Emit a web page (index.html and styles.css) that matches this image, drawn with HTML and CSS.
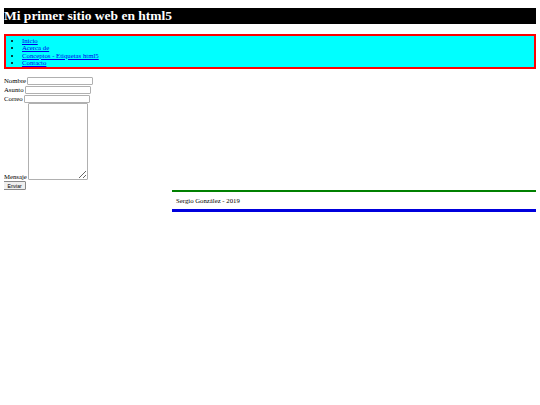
FILE: index.html
```html
<!DOCTYPE html>
<html lang="es">
<head>
  <meta charset="UTF-8" />
  <title>Mi primer sitio web en html5</title>
  <link rel="stylesheet" href="styles.css">
</head>
<body>
  <header>
    <h1>Mi primer sitio web en html5</h1>
  </header>

  <nav class="menu">
    <ul>
      <li><a href="#">Inicio</a></li>
      <li><a href="#">Acerca de</a></li>
      <li><a href="#">Conceptos - Etiquetas html5</a></li>
      <li><a href="#">Contacto</a></li>
    </ul>
  </nav>

  <form class="contacto">
    <p class="fila"><label for="nombre">Nombre</label> <input type="text" id="nombre"></p>
    <p class="fila"><label for="asunto">Asunto</label> <input type="text" id="asunto"></p>
    <p class="fila"><label for="correo">Correo</label> <input type="text" id="correo"></p>
    <p class="fila mensaje"><label for="mensaje">Mensaje</label> <textarea id="mensaje"></textarea></p>
    <button type="button">Enviar</button>
  </form>

  <footer>
    <p>Sergio González - 2019</p>
  </footer>
</body>
</html>
```

FILE: styles.css
```css
    body {
      font-family: "Liberation Serif", serif;
      font-size: 6.75px;
      margin: 0 4px;
      background: white;
    }
    h1 {
      background: black;
      color: white;
      font-size: 13.5px;
      line-height: 16px;
      margin: 8px 0 10px;
    }
    .menu {
      background: cyan;
      border: 2px solid red;
    }
    .menu ul {
      margin: 0;
      padding: 1px 0 1px 16px;
      line-height: 7.3px;
    }
    .menu a {
      color: #0000ee;
    }
    .contacto {
      margin-top: 7px;
    }
    .fila {
      margin: 0;
      height: 9px;
      display: flex;
      align-items: center;
      gap: 1px;
    }
    .fila input {
      box-sizing: border-box;
      width: 66px;
      height: 8px;
      padding: 0;
      border: 1px solid #b0b0b0;
      border-radius: 1px;
      font-size: 5px;
    }
    .fila.mensaje {
      height: auto;
      align-items: flex-end;
    }
    .fila.mensaje label {
      line-height: 6px;
    }
    textarea {
      box-sizing: border-box;
      width: 60px;
      height: 77px;
      padding: 0;
      border: 1px solid #b0b0b0;
      border-radius: 1px;
      resize: both;
      font-size: 5px;
    }
    .contacto button {
      display: block;
      margin-top: 1px;
      margin-left: -1px;
      width: 23px;
      height: 9px;
      padding: 0;
      font-family: "Liberation Sans", sans-serif;
      font-size: 5px;
      background: #efefef;
      border: 1px solid #888;
      border-radius: 1px;
    }
    footer {
      margin-left: 168px;
      border-top: 2px solid green;
      border-bottom: 3px solid #0000dd;
    }
    footer p {
      margin: 0;
      padding: 5px 4px;
      line-height: 7px;
    }
```
